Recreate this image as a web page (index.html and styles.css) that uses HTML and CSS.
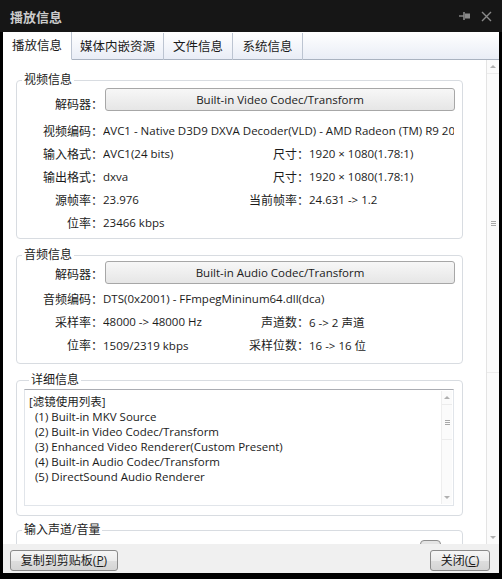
FILE: index.html
```html
<!DOCTYPE html>
<html lang="zh-CN">
<head>
    <meta charset="UTF-8">
    <meta name="viewport" content="width=device-width, initial-scale=1.0">
    <title>播放信息</title>
    <link rel="stylesheet" href="styles.css">
</head>
<body>
    <div class="window">
        <div class="titlebar">
            <span class="title">播放信息</span>
            <div class="title-icons">
                <svg width="12" height="10" viewBox="0 0 12 10">
                    <path d="M0 5h5" stroke="#8a8a8a" stroke-width="1.4"/>
                    <path d="M5 1v8" stroke="#8a8a8a" stroke-width="1.6"/>
                    <path d="M6 2.5h5v5h-5z" fill="#8a8a8a"/>
                </svg>
                <svg width="11" height="11" viewBox="0 0 11 11">
                    <path d="M1 1l9 9M10 1l-9 9" stroke="#8a8a8a" stroke-width="1.4"/>
                </svg>
            </div>
        </div>

        <div class="tabs">
            <div class="tab active">播放信息</div>
            <div class="tab">媒体内嵌资源</div>
            <div class="tab">文件信息</div>
            <div class="tab">系统信息</div>
        </div>

        <div class="main">
            <div class="content">
                <fieldset class="group video">
                    <legend>视频信息</legend>
                    <div class="grid">
                        <span class="label">解码器：</span>
                        <div class="btn decoder">Built-in Video Codec/Transform</div>
                        <span class="label">视频编码：</span>
                        <span class="value wide">AVC1 - Native D3D9 DXVA Decoder(VLD) - AMD Radeon (TM) R9 200 Series</span>
                        <span class="label">输入格式：</span>
                        <span class="value">AVC1(24 bits)</span>
                        <span class="label">尺寸：</span>
                        <span class="value">1920 × 1080(1.78:1)</span>
                        <span class="label">输出格式：</span>
                        <span class="value">dxva</span>
                        <span class="label">尺寸：</span>
                        <span class="value">1920 × 1080(1.78:1)</span>
                        <span class="label">源帧率：</span>
                        <span class="value">23.976</span>
                        <span class="label">当前帧率：</span>
                        <span class="value">24.631 -&gt; 1.2</span>
                        <span class="label">位率：</span>
                        <span class="value">23466 kbps</span>
                        <span></span>
                        <span></span>
                    </div>
                </fieldset>

                <fieldset class="group audio">
                    <legend>音频信息</legend>
                    <div class="grid">
                        <span class="label">解码器：</span>
                        <div class="btn decoder">Built-in Audio Codec/Transform</div>
                        <span class="label">音频编码：</span>
                        <span class="value wide">DTS(0x2001) - FFmpegMininum64.dll(dca)</span>
                        <span class="label">采样率：</span>
                        <span class="value">48000 -&gt; 48000 Hz</span>
                        <span class="label">声道数：</span>
                        <span class="value">6 -&gt; 2 声道</span>
                        <span class="label">位率：</span>
                        <span class="value">1509/2319 kbps</span>
                        <span class="label">采样位数：</span>
                        <span class="value">16 -&gt; 16 位</span>
                    </div>
                </fieldset>

                <fieldset class="group details">
                    <legend>详细信息</legend>
                    <div class="textbox">
                        <div class="lines">
                            <div>[滤镜使用列表]</div>
                            <div>&nbsp;&nbsp;(1) Built-in MKV Source</div>
                            <div>&nbsp;&nbsp;(2) Built-in Video Codec/Transform</div>
                            <div>&nbsp;&nbsp;(3) Enhanced Video Renderer(Custom Present)</div>
                            <div>&nbsp;&nbsp;(4) Built-in Audio Codec/Transform</div>
                            <div>&nbsp;&nbsp;(5) DirectSound Audio Renderer</div>
                        </div>
                        <div class="scrollbar small">
                            <span class="arrow up"></span>
                            <div class="thumb"><span class="grip"></span></div>
                            <span class="arrow down"></span>
                        </div>
                    </div>
                </fieldset>

                <fieldset class="group volume">
                    <legend>输入声道/音量</legend>
                    <div class="knob"></div>
                </fieldset>
            </div>

            <div class="scrollbar big">
                <span class="arrow up"></span>
                <div class="thumb"><span class="grip"></span></div>
                <span class="arrow down"></span>
            </div>
        </div>

        <div class="footer">
            <button class="btn">复制到剪贴板(<u>P</u>)</button>
            <button class="btn close">关闭(<u>C</u>)</button>
        </div>
    </div>
</body>
</html>
```

FILE: styles.css
```css
body {
    margin: 0;
    background-color: #000;
    font-family: 'Open Sans', 'Noto Sans CJK SC', sans-serif;
    font-size: 12px;
    color: #1b1b1b;
}

.window {
    width: 502px;
    height: 579px;
    display: flex;
    flex-direction: column;
    padding: 0 3px 6px 3px;
    box-sizing: border-box;
    background-color: #000;
}

.titlebar {
    height: 32px;
    flex-shrink: 0;
    display: flex;
    align-items: center;
    justify-content: space-between;
    background-color: #161616;
    margin: 0 -3px;
    padding: 0 10px 0 10px;
}

.title {
    color: #cbcbcb;
    font-size: 13px;
    font-weight: bold;
    font-family: 'Noto Sans CJK SC', sans-serif;
}

.title-icons {
    display: flex;
    align-items: center;
    gap: 10px;
}

.tabs {
    height: 28px;
    flex-shrink: 0;
    display: flex;
    align-items: flex-end;
    box-sizing: border-box;
    border-bottom: 1px solid #a9b2c0;
    background: linear-gradient(#ffffff, #e9edf6);
}

.tab {
    height: 27px;
    line-height: 27px;
    box-sizing: border-box;
    border-right: 1px solid #bcc4d1;
    font-size: 12.5px;
    text-align: center;
    margin-bottom: -1px;
}

.tab:nth-child(1) { width: 69px; }
.tab:nth-child(2) { width: 92px; }
.tab:nth-child(3) { width: 69px; }
.tab:nth-child(4) { width: 70px; }

.tab.active {
    height: 28px;
    background-color: #fff;
    border-bottom: 1px solid #fff;
}

.main {
    flex: 1;
    display: flex;
    background-color: #fff;
    overflow: hidden;
}

.content {
    flex: 1;
    padding: 12px 23px 0 13px;
    overflow: hidden;
}

.group {
    margin: 0 0 8px 0;
    padding: 0 0 4px 0;
    border: 1px solid #d8dce1;
    border-radius: 4px;
    min-width: 0;
}

.group legend {
    margin-left: 5px;
    padding: 0 2px;
    line-height: 16px;
}

.grid {
    display: grid;
    grid-template-columns: 86px 126px 80px 1fr;
    grid-auto-rows: 23px;
    align-items: center;
}

.video .grid { grid-template-rows: 31px repeat(5, 23px); }
.audio .grid { grid-template-rows: 24px 23px 23px 24px; }

.label {
    text-align: right;
    white-space: nowrap;
}

.value {
    font-size: 11.5px;
    white-space: nowrap;
    overflow: hidden;
}

.value.wide {
    grid-column: span 3;
    margin-right: 8px;
}

.btn {
    border: 1px solid #a7a7a7;
    border-radius: 3px;
    background: linear-gradient(#f6f6f6 0%, #ececec 50%, #dedede 51%, #d4d4d4 100%);
    font-family: inherit;
    font-size: 12px;
    color: #1b1b1b;
    text-align: center;
    box-sizing: border-box;
}

.btn.decoder {
    grid-column: span 3;
    align-self: start;
    height: 23px;
    line-height: 21px;
    margin: 0 7px 0 2px;
    font-size: 11.5px;
    background: linear-gradient(#f7f7f7, #e6e6e6);
}

.audio .btn.decoder { margin-top: -2px; }
.audio .grid .label:first-child { margin-top: -3px; }
.audio { padding-bottom: 6px; }

.details {
    margin-bottom: 6px;
    padding: 1px 8px 9px 7px;
}

.textbox {
    height: 117px;
    display: flex;
    border: 1px solid #e1e5ea;
    border-top-color: #abadb3;
    box-sizing: border-box;
}

.lines {
    flex: 1;
    padding: 4px 4px 0 4px;
    font-size: 11.5px;
    line-height: 15px;
    white-space: nowrap;
    overflow: hidden;
}

.scrollbar {
    display: flex;
    flex-direction: column;
    align-items: center;
    background-color: #fbfbfb;
    flex-shrink: 0;
}

.scrollbar.small {
    width: 10px;
    margin: 1px 1px 1px 0;
    border-left: 1px solid #eee;
}

.scrollbar.big {
    width: 12px;
    border-left: 1px solid #e4e4e4;
}

.arrow {
    width: 0;
    height: 0;
    border-left: 3px solid transparent;
    border-right: 3px solid transparent;
    margin: 5px 0;
}

.arrow.up { border-bottom: 3px solid #b0b0b0; }
.arrow.down { border-top: 3px solid #b0b0b0; margin-top: auto; }

.thumb {
    width: 100%;
    display: flex;
    align-items: center;
    justify-content: center;
    box-sizing: border-box;
    border-top: 1px solid #ececec;
    border-bottom: 1px solid #ececec;
}

.small .thumb { height: 36px; }
.big .thumb { height: 300px; }

.grip {
    width: 5px;
    height: 5px;
    background: repeating-linear-gradient(#a8a8a8 0 1px, transparent 1px 2px);
}

.volume {
    height: 30px;
    margin-bottom: 0;
}

.knob {
    width: 19px;
    height: 12px;
    margin: 2px 21px 0 auto;
    border: 1px solid #8d8d8d;
    border-radius: 4px;
    background-color: #e4e4e4;
}

.footer {
    height: 29px;
    flex-shrink: 0;
    display: flex;
    justify-content: space-between;
    align-items: flex-start;
    padding: 6px 9px 0 7px;
    box-sizing: border-box;
    background-color: #f0f0f0;
}

.footer .btn {
    height: 21px;
    width: 108px;
    padding: 0;
    border-color: #8a8a8a;
    line-height: 19px;
}

.footer .btn.close {
    width: 60px;
}
```
